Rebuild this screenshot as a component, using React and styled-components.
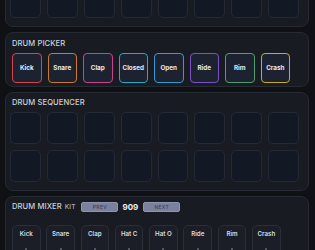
import React from "react";
import styled, { createGlobalStyle } from "styled-components";

const Global = createGlobalStyle`
  html, body { margin: 0; padding: 0; background: #0f1115; overflow: hidden; }
  body { font-family: Inter, "Noto Sans", sans-serif; color: #d5d8df; }
`;

const Page = styled.div`
  display: flex;
  flex-direction: column;
  gap: 5px;
  padding: 0 6px 0 5px;
  width: 304px;
`;

const Panel = styled.section`
  background: #181b22;
  border: 1px solid #262a33;
  border-radius: 8px;
  padding: ${(p) => p.$pad || "5px 4px 8px 4px"};
  margin-top: ${(p) => p.$mt || "0"};
`;

const Title = styled.h2`
  margin: 0 0 0 ${(p) => p.$ml || "0"};
  font-size: 7.6px;
  line-height: 10px;
  font-weight: 500;
  letter-spacing: 0.1px;
  text-transform: uppercase;
  color: #cfd2d9;
  white-space: nowrap;
`;

const PadGrid = styled.div`
  display: grid;
  grid-template-columns: repeat(8, 1fr);
  gap: 6px;
  width: 289px;
  margin-top: ${(p) => p.$mt || "0"};
`;

const Pad = styled.div`
  height: 32px;
  background: #131924;
  border: 1px solid #232a36;
  border-radius: 5px;
  box-sizing: border-box;
`;

const PickerRow = styled.div`
  display: flex;
  gap: 6px;
  margin: 4px 0 0 2px;
`;

const PickBtn = styled.button`
  width: 29.5px;
  height: 30px;
  box-sizing: border-box;
  padding: 0;
  background: #1d2231;
  border: 1.5px solid ${(p) => p.$c};
  border-radius: 4px;
  color: #e8eaf0;
  font-family: Inter, "Noto Sans", sans-serif;
  font-size: 6.3px;
  font-weight: 700;
  display: flex;
  align-items: center;
  justify-content: center;
`;

const MixHeader = styled.div`
  display: flex;
  align-items: center;
  height: 12px;
  margin-left: 2px;
`;

const Kit = styled.span`
  font-size: 6.6px;
  font-weight: 500;
  color: #a9adb8;
  margin-left: 3px;
`;

const KitBtn = styled.button`
  width: 37px;
  height: 10px;
  padding: 0;
  border: 1px solid #8e95b0;
  border-radius: 2px;
  background: #7a819e;
  color: #3a3f55;
  font-family: Inter, "Noto Sans", sans-serif;
  font-size: 5px;
  font-weight: 500;
  letter-spacing: 0.3px;
  margin-left: ${(p) => p.$ml || "0"};
`;

const KitNum = styled.span`
  font-size: 8px;
  font-weight: 700;
  color: #f1f2f5;
  margin: 0 5px 0 4px;
`;

const MixRow = styled.div`
  display: flex;
  gap: 5.8px;
  margin: 12px 0 0 2px;
`;

const Channel = styled.div`
  width: 28.5px;
  height: 40px;
  box-sizing: border-box;
  background: #1b1e26;
  border: 1px solid #2a2e38;
  border-radius: 5px;
  display: flex;
  flex-direction: column;
  align-items: center;
  padding-top: 4px;
`;

const ChLabel = styled.span`
  font-size: 6.2px;
  line-height: 8px;
  font-weight: 600;
  color: #d9dce3;
`;

const Slider = styled.div`
  width: 2px;
  height: 20px;
  margin-top: 10px;
  border-radius: 1px;
  background: #5a606d;
`;

const picker = [
  ["Kick", "#d9434f"],
  ["Snare", "#c97a2a"],
  ["Clap", "#cc438b"],
  ["Closed", "#22a9c6"],
  ["Open", "#3399d2"],
  ["Ride", "#7d52c9"],
  ["Rim", "#4f9e6d"],
  ["Crash", "#c9a928"],
];

const channels = ["Kick", "Snare", "Clap", "Hat C", "Hat O", "Ride", "Rim", "Crash"];

export default function App() {
  const eight = Array.from({ length: 8 });
  const sixteen = Array.from({ length: 16 });
  return (
    <>
      <Global />
      <Page>
        <Panel $mt="-20px">
          <PadGrid>
            {eight.map((_, i) => (
              <Pad key={i} />
            ))}
          </PadGrid>
        </Panel>
        <Panel $pad="6px 4px 3px 4px">
          <Title $ml="2px">Drum Picker</Title>
          <PickerRow>
            {picker.map(([n, c]) => (
              <PickBtn key={n} $c={c}>
                {n}
              </PickBtn>
            ))}
          </PickerRow>
        </Panel>
        <Panel $pad="5px 4px 8px 4px">
          <Title $ml="2px">Drum Sequencer</Title>
          <PadGrid $mt="4px">
            {sixteen.map((_, i) => (
              <Pad key={i} />
            ))}
          </PadGrid>
        </Panel>
        <Panel $pad="4px 4px 20px 4px">
          <MixHeader>
            <Title>Drum Mixer</Title>
            <Kit>KIT</Kit>
            <KitBtn $ml="6px">PREV</KitBtn>
            <KitNum>909</KitNum>
            <KitBtn>NEXT</KitBtn>
          </MixHeader>
          <MixRow>
            {channels.map((c) => (
              <Channel key={c}>
                <ChLabel>{c}</ChLabel>
                <Slider />
              </Channel>
            ))}
          </MixRow>
        </Panel>
      </Page>
    </>
  );
}
